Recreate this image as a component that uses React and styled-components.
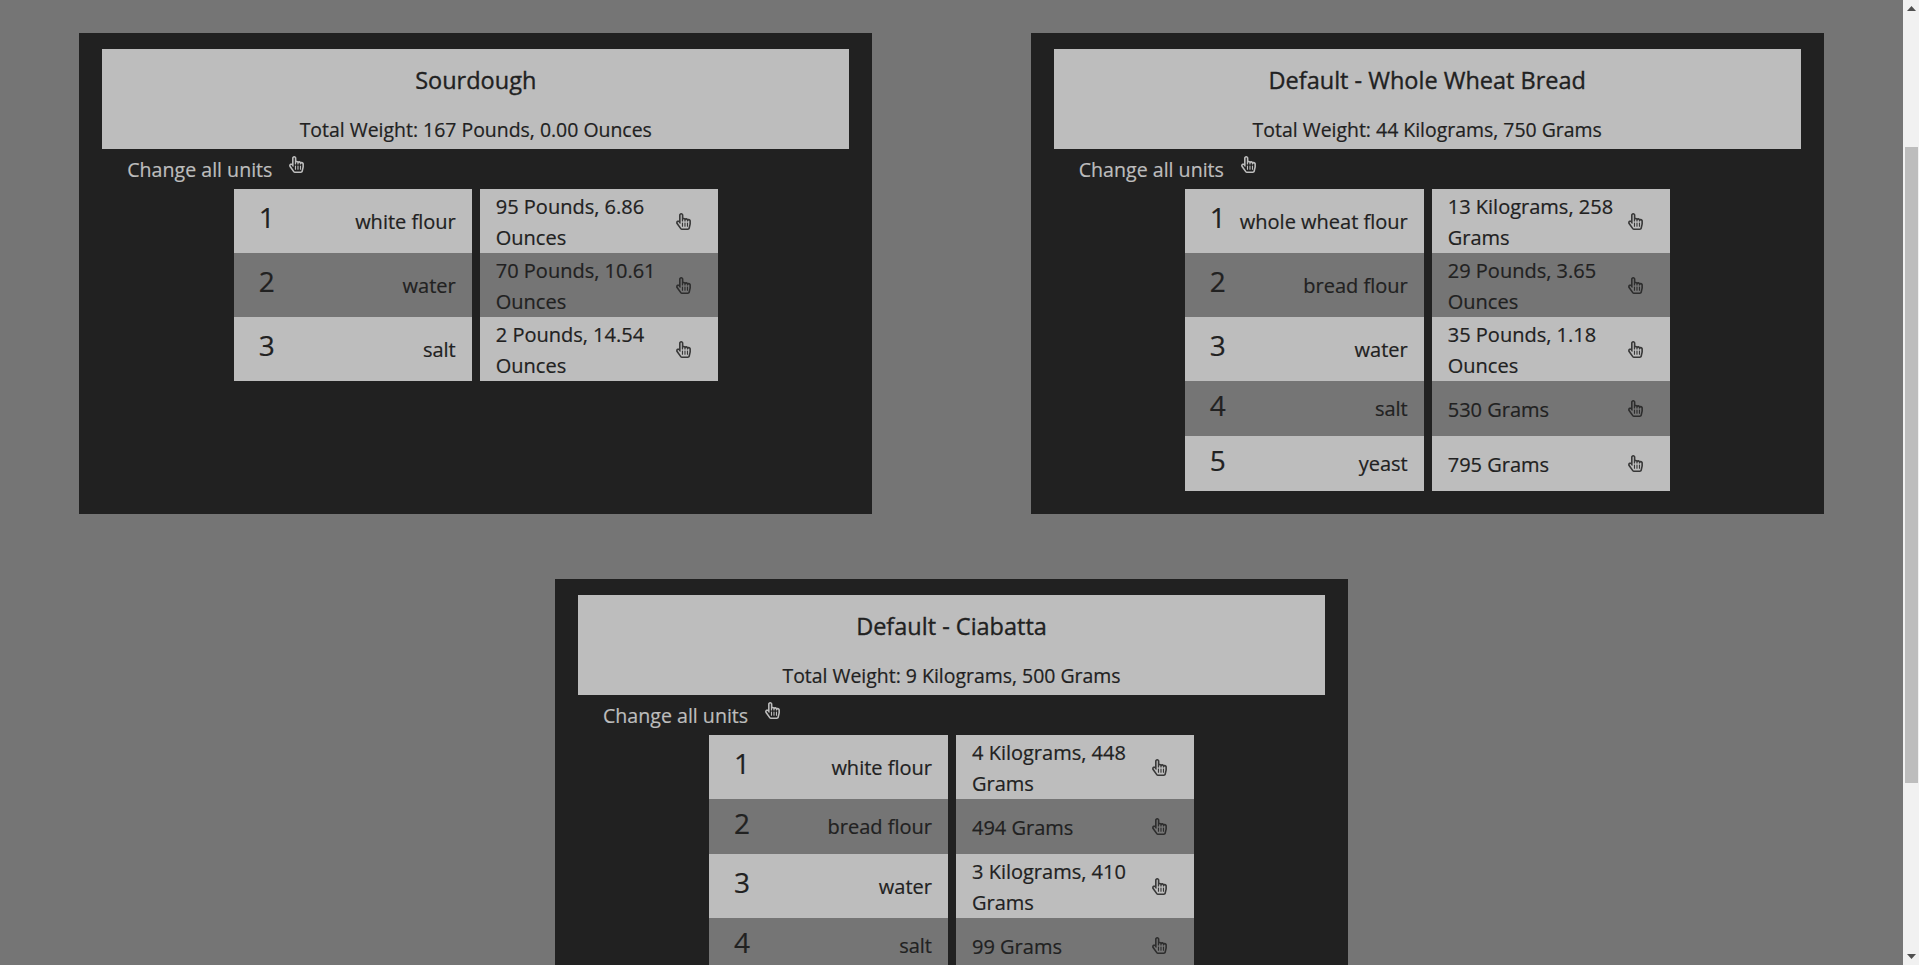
import React from 'react';
import styled, { createGlobalStyle } from 'styled-components';
import { FaRegHandPointer } from 'react-icons/fa';

const GlobalStyle = createGlobalStyle`
  html, body {
    margin: 0;
    height: 100%;
    overflow: hidden;
    background: #757575;
    font-family: "Open Sans", "Liberation Sans", sans-serif;
    color: #212121;
  }
`;

const Viewport = styled.div`
  display: flex;
  height: 965px;
  overflow: hidden;
`;

const Page = styled.main`
  flex: 1;
  min-width: 0;
  display: flex;
  flex-wrap: wrap;
  justify-content: space-around;
  align-content: flex-start;
  row-gap: 65px;
  padding-top: 33px;
`;

const Card = styled.section`
  box-sizing: border-box;
  width: 793px;
  padding: 16px 23px 23px;
  background: #212121;
`;

const Header = styled.header`
  height: 100px;
  box-sizing: border-box;
  padding-top: 15px;
  background: #bdbdbd;
  text-align: center;
`;

const Title = styled.h2`
  margin: 0 0 18px;
  font-size: 23.5px;
  line-height: 32px;
  font-weight: 400;
  -webkit-text-stroke: 0.35px currentColor;
`;

const Total = styled.div`
  font-size: 19.45px;
  line-height: 32px;
  -webkit-text-stroke: 0.2px currentColor;
`;

const UnitsRow = styled.div`
  display: flex;
  height: 40px;
  align-items: center;
  padding-left: 25px;
  gap: 16px;
  color: #bdbdbd;
  font-size: 19.6px;
  -webkit-text-stroke: 0.2px currentColor;
`;

const UnitsIcon = styled.span`
  display: flex;
  margin-bottom: 10px;
  font-size: 17px;
`;

const Table = styled.div`
  display: grid;
  grid-template-columns: ${(p) => p.$left}px ${(p) => p.$right}px;
  column-gap: 8px;
  justify-content: center;
`;

const Cell = styled.div`
  display: flex;
  align-items: center;
  box-sizing: border-box;
  min-height: 55px;
  padding: 2px 16px 0;
  font-size: 20px;
  line-height: 31px;
  -webkit-text-stroke: 0.2px currentColor;
  background: ${(p) => (p.$dark ? '#757575' : '#bdbdbd')};
`;

const Step = styled.span`
  margin: 0 0 10px 9px;
  font-size: 28px;
  line-height: 32px;
`;

const Ingredient = styled.span`
  flex: 1;
  margin-bottom: 2px;
  text-align: right;
  white-space: nowrap;
`;

const Amount = styled.span`
  flex: 1;
`;

const RowIcon = styled.span`
  display: flex;
  flex: none;
  margin: 0 10px 2px 8px;
  font-size: 17px;
  opacity: 0.85;
`;

const Scrollbar = styled.aside`
  flex: none;
  width: 16px;
  position: relative;
  background: #f1f1f1;
`;

const Thumb = styled.div`
  position: absolute;
  top: 147px;
  left: 2px;
  width: 13px;
  height: 636px;
  background: #bdbdbd;
`;

const Arrow = styled.svg`
  position: absolute;
  left: 4px;
  width: 9px;
  height: 5px;
  top: ${(p) => p.$top}px;
  fill: #505050;
`;

const recipes = [
  {
    title: 'Sourdough',
    total: 'Total Weight: 167 Pounds, 0.00 Ounces',
    left: 238,
    right: 238,
    rows: [
      ['white flour', '95 Pounds, 6.86 Ounces'],
      ['water', '70 Pounds, 10.61 Ounces'],
      ['salt', '2 Pounds, 14.54 Ounces'],
    ],
  },
  {
    title: 'Default - Whole Wheat Bread',
    total: 'Total Weight: 44 Kilograms, 750 Grams',
    left: 239,
    right: 238,
    rows: [
      ['whole wheat flour', '13 Kilograms, 258 Grams'],
      ['bread flour', '29 Pounds, 3.65 Ounces'],
      ['water', '35 Pounds, 1.18 Ounces'],
      ['salt', '530 Grams'],
      ['yeast', '795 Grams'],
    ],
  },
  {
    title: 'Default - Ciabatta',
    total: 'Total Weight: 9 Kilograms, 500 Grams',
    left: 239,
    right: 238,
    rows: [
      ['white flour', '4 Kilograms, 448 Grams'],
      ['bread flour', '494 Grams'],
      ['water', '3 Kilograms, 410 Grams'],
      ['salt', '99 Grams'],
    ],
  },
];

function Recipe({ recipe }) {
  return (
    <Card>
      <Header>
        <Title>{recipe.title}</Title>
        <Total>{recipe.total}</Total>
      </Header>
      <UnitsRow>
        Change all units
        <UnitsIcon><FaRegHandPointer /></UnitsIcon>
      </UnitsRow>
      <Table $left={recipe.left} $right={recipe.right}>
        {recipe.rows.map(([name, amount], i) => (
          <React.Fragment key={name}>
            <Cell $dark={i % 2 === 1}>
              <Step>{i + 1}</Step>
              <Ingredient>{name}</Ingredient>
            </Cell>
            <Cell $dark={i % 2 === 1}>
              <Amount>{amount}</Amount>
              <RowIcon><FaRegHandPointer /></RowIcon>
            </Cell>
          </React.Fragment>
        ))}
      </Table>
    </Card>
  );
}

export default function App() {
  return (
    <Viewport>
      <GlobalStyle />
      <Page>
        {recipes.map((r) => <Recipe key={r.title} recipe={r} />)}
      </Page>
      <Scrollbar>
        <Arrow $top={6} viewBox="0 0 9 5"><path d="M4.5 0L9 5H0z" /></Arrow>
        <Thumb />
        <Arrow $top={954} viewBox="0 0 9 5"><path d="M0 0h9L4.5 5z" /></Arrow>
      </Scrollbar>
    </Viewport>
  );
}
